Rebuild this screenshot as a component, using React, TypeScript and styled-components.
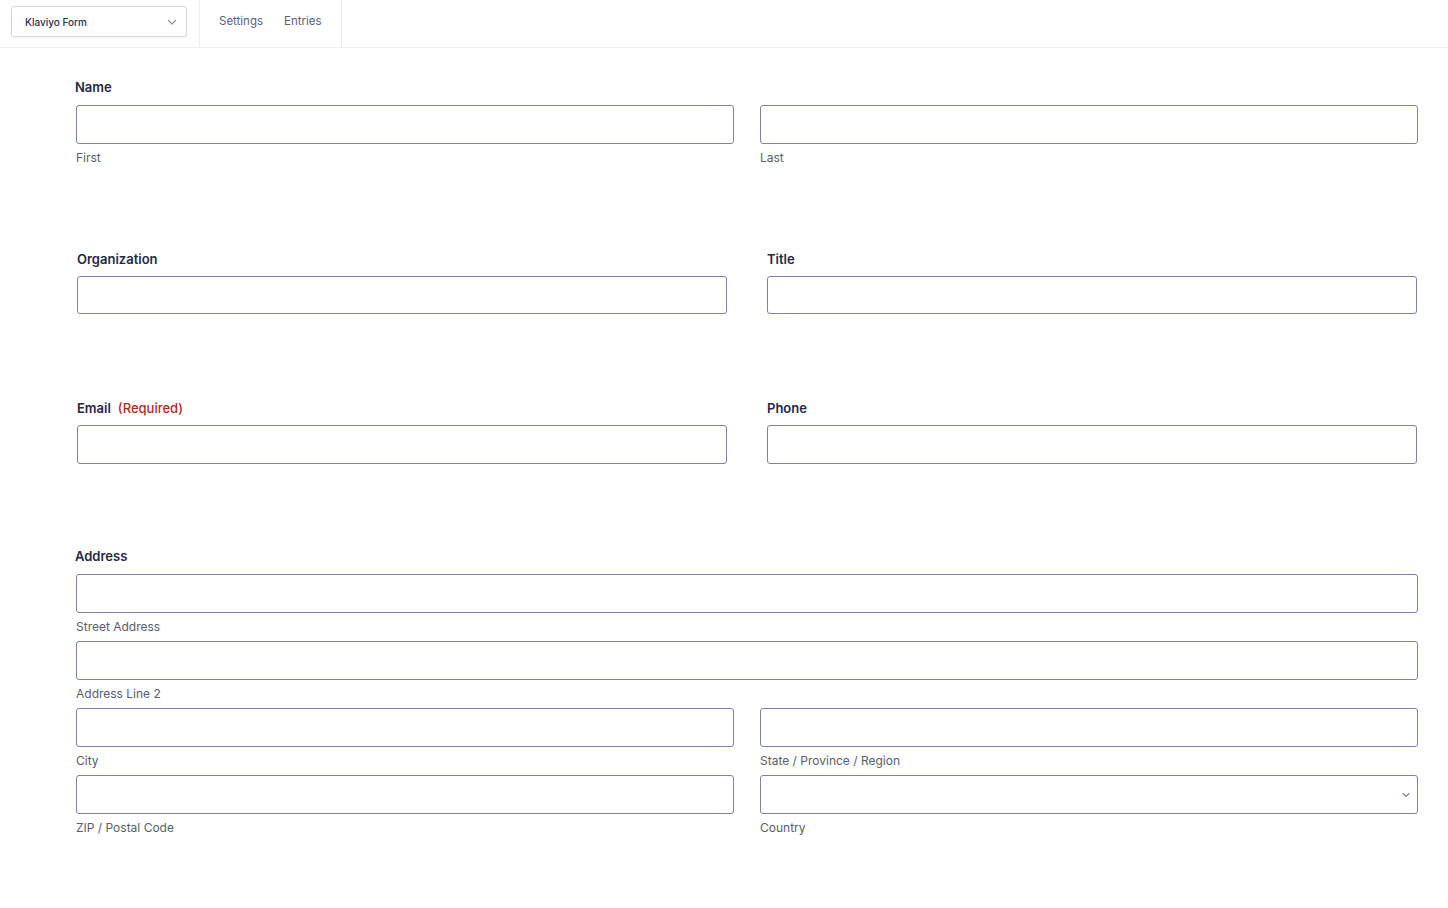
import React, { FC } from 'react'
import styled, { createGlobalStyle } from 'styled-components'

const GlobalStyle = createGlobalStyle`
  html, body {
    margin: 0;
    padding: 0;
    background: #fff;
    font-family: Inter, "Noto Sans", sans-serif;
    color: #23284a;
  }
  * { box-sizing: border-box; }
`

const TopBar = styled.header`
  display: flex;
  align-items: stretch;
  height: 48px;
  border-bottom: 1px solid #ecedf8;
`

const FormSwitcher = styled.div`
  display: flex;
  align-items: flex-start;
  padding: 6px 12px 0 11px;
  height: 47px;
  border-right: 1px solid #ecedf8;
`

const SwitcherBox = styled.div`
  width: 176px;
  height: 31px;
  border: 1px solid #d5d7e9;
  border-radius: 3px;
  display: flex;
  align-items: center;
  justify-content: space-between;
  padding: 0 9px 0 13px;
  font-size: 10px;
  font-weight: 500;
  color: #2b2f52;
  box-shadow: 0 1px 2px rgba(40, 40, 90, 0.06);
`

const TopLinks = styled.nav`
  display: flex;
  align-items: center;
  gap: 21px;
  padding: 0 19px 5px 19px;
  height: 47px;
  border-right: 1px solid #ecedf8;
`

const TopLink = styled.span`
  font-size: 11.5px;
  color: #5b5e80;
`

const Form = styled.main`
  padding: 31px 30px 40px 76px;
`

const Section = styled.section<{ $top: number }>`
  margin-top: ${(p) => p.$top}px;
`

const Legend = styled.div<{ $shift?: number; $gap?: number }>`
  font-size: 13px;
  line-height: 17px;
  font-weight: 600;
  color: #23284a;
  margin: 0 0 ${(p) => p.$gap ?? 9}px ${(p) => p.$shift ?? 0}px;
`

const Required = styled.span`
  color: #ae2a2a;
  font-weight: 500;
  margin-left: 7px;
`

const ComplexGrid = styled.div`
  display: grid;
  grid-template-columns: 1fr 1fr;
  column-gap: 26px;
  row-gap: 7px;
`

const SimpleGrid = styled.div`
  display: grid;
  grid-template-columns: 1fr 1fr;
  column-gap: 40px;
  padding: 0 1px;
`

const Cell = styled.div<{ $full?: boolean }>`
  grid-column: ${(p) => (p.$full ? '1 / -1' : 'auto')};
`

const Input = styled.div<{ $h?: number }>`
  position: relative;
  height: ${(p) => p.$h ?? 39}px;
  border: 1px solid #7f82a6;
  border-radius: 3px;
  background: #fff;
`

const Caret = styled.svg`
  position: absolute;
  right: 6px;
  top: 50%;
  transform: translateY(-50%);
`

const SubLabel = styled.div`
  font-size: 12px;
  line-height: 15px;
  color: #585e6a;
  margin-top: 6px;
`

const Chevron: FC<{ color: string; size?: number }> = ({ color, size = 10 }) => (
  <svg width={size} height={size} viewBox="0 0 10 10" fill="none">
    <path d="M1.5 3.5 L5 7 L8.5 3.5" stroke={color} strokeWidth="1.2" strokeLinecap="round" strokeLinejoin="round" />
  </svg>
)

const SimpleField: FC<{ label: string; required?: boolean; height?: number }> = ({ label, required, height }) => (
  <div>
    <Legend $gap={8}>
      {label}
      {required && <Required>(Required)</Required>}
    </Legend>
    <Input $h={height ?? 38} />
  </div>
)

const ComplexInput: FC<{ label: string; full?: boolean; select?: boolean }> = ({ label, full, select }) => (
  <Cell $full={full}>
    <Input>
      {select && (
        <Caret width="10" height="10" viewBox="0 0 10 10" fill="none">
          <path d="M2 3.5 L5 6.5 L8 3.5" stroke="#7f82a6" strokeWidth="1.1" strokeLinecap="round" strokeLinejoin="round" />
        </Caret>
      )}
    </Input>
    <SubLabel>{label}</SubLabel>
  </Cell>
)

const App: FC = () => (
  <>
    <GlobalStyle />
    <TopBar>
      <FormSwitcher>
        <SwitcherBox>
          Klaviyo Form
          <Chevron color="#8d90ad" />
        </SwitcherBox>
      </FormSwitcher>
      <TopLinks>
        <TopLink>Settings</TopLink>
        <TopLink>Entries</TopLink>
      </TopLinks>
    </TopBar>

    <Form>
      <Section $top={0}>
        <Legend $shift={-1}>Name</Legend>
        <ComplexGrid>
          <ComplexInput label="First" />
          <ComplexInput label="Last" />
        </ComplexGrid>
      </Section>

      <Section $top={86}>
        <SimpleGrid>
          <SimpleField label="Organization" />
          <SimpleField label="Title" />
        </SimpleGrid>
      </Section>

      <Section $top={86}>
        <SimpleGrid>
          <SimpleField label="Email" required height={39} />
          <SimpleField label="Phone" height={39} />
        </SimpleGrid>
      </Section>

      <Section $top={84}>
        <Legend $shift={-1}>Address</Legend>
        <ComplexGrid>
          <ComplexInput label="Street Address" full />
          <ComplexInput label="Address Line 2" full />
          <ComplexInput label="City" />
          <ComplexInput label="State / Province / Region" />
          <ComplexInput label="ZIP / Postal Code" />
          <ComplexInput label="Country" select />
        </ComplexGrid>
      </Section>
    </Form>
  </>
)

export default App
